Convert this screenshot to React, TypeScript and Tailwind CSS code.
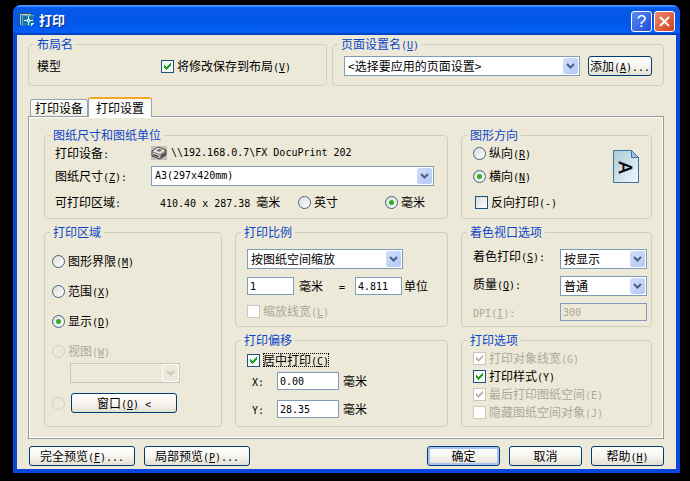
import type { ReactNode } from "react";
import clsx from "clsx";

// Latin runs are set in a small monospace face, "_X" marks the access key.
function Txt({ children }: { children: string }) {
  const parts = children.split(/([\x20-\x7e]+)/).filter(Boolean);
  return (
    <>
      {parts.map((part, i) => {
        if (!/^[\x20-\x7e]+$/.test(part)) return <span key={i}>{part}</span>;
        const [before, after] = part.split("_");
        return (
          <span
            key={i}
            className="whitespace-pre font-['DejaVu_Sans_Mono',monospace] text-[10px] leading-none"
          >
            {before}
            {after && <span className="underline underline-offset-1">{after[0]}</span>}
            {after && after.slice(1)}
          </span>
        );
      })}
    </>
  );
}

type GroupProps = { title: string; className?: string; children: ReactNode };

function Group({ title, className, children }: GroupProps) {
  return (
    <fieldset className={clsx("min-w-0 rounded-[4px] border border-[#d0cfbe]", className)}>
      <legend className="ml-[5px] h-[14px] px-[3px] leading-[14px] text-[#0b46c8]">
        <Txt>{title}</Txt>
      </legend>
      {children}
    </fieldset>
  );
}

type CheckProps = {
  label: string;
  checked?: boolean;
  disabled?: boolean;
  focused?: boolean;
};

function Check({ label, checked, disabled, focused }: CheckProps) {
  return (
    <label className={clsx("flex items-center gap-[3px]", disabled && "text-[#aca899]")}>
      <span className="grid size-[13px] shrink-0 place-items-center">
        <input
          type="checkbox"
          defaultChecked={checked}
          disabled={disabled}
          className="peer col-start-1 row-start-1 size-[13px] appearance-none border border-[#1c5180] bg-linear-to-br from-[#dcdcd7] to-white checked:bg-none checked:bg-[#f6f8f4] disabled:border-[#cac8bb] disabled:bg-none disabled:bg-white"
        />
        <svg
          viewBox="0 0 7 7"
          className={clsx(
            "pointer-events-none col-start-1 row-start-1 hidden size-[7px] peer-checked:block",
            disabled ? "fill-[#bfbcae]" : "fill-[#21a121]"
          )}
          shapeRendering="crispEdges"
        >
          <path d="M0 2h1v1h1v1h1v-1h1v-1h1v-1h1v-1h1v3h-1v1h-1v1h-1v1h-1v1h-1v-1h-1v-1h-1z" />
        </svg>
      </span>
      <span
        className={clsx(
          "whitespace-nowrap leading-[14px]",
          focused && "outline-1 outline-dotted outline-black -outline-offset-1"
        )}
      >
        <Txt>{label}</Txt>
      </span>
    </label>
  );
}

type RadioProps = { label?: string; name: string; checked?: boolean; disabled?: boolean };

function Radio({ label, name, checked, disabled }: RadioProps) {
  return (
    <label
      className={clsx("flex items-center gap-[3px] leading-[14px]", disabled && "text-[#aca899]")}
    >
      <span className="grid size-[13px] shrink-0 place-items-center">
        <input
          type="radio"
          name={name}
          defaultChecked={checked}
          disabled={disabled}
          aria-label={label ? undefined : "窗口"}
          className="peer col-start-1 row-start-1 size-[13px] appearance-none rounded-full border border-[#3f6388] bg-linear-to-br from-[#dcdcd7] to-white disabled:border-[#cfcdbf] disabled:bg-none"
        />
        <span className="pointer-events-none col-start-1 row-start-1 hidden size-[5px] rounded-full bg-[#2fae2b] peer-checked:block" />
      </span>
      {label && (
        <span className="whitespace-nowrap">
          <Txt>{label}</Txt>
        </span>
      )}
    </label>
  );
}

type SelectProps = {
  id?: string;
  label?: string;
  value: string;
  mono?: boolean;
  disabled?: boolean;
  className?: string;
};

function Select({ id, label, value, mono, disabled, className }: SelectProps) {
  return (
    <div className={clsx("grid h-5 items-center", className)}>
      <select
        id={id}
        aria-label={label}
        disabled={disabled}
        className={clsx(
          "col-start-1 row-start-1 h-5 w-full min-w-0 appearance-none border pl-[3px] pr-5 opacity-100",
          mono && "font-['DejaVu_Sans_Mono',monospace] text-[10px]",
          disabled ? "border-[#c9c7ba] bg-[#ece9d8]" : "border-[#7f9db9] bg-white"
        )}
      >
        <option>{value}</option>
      </select>
      <span
        className={clsx(
          "pointer-events-none col-start-1 row-start-1 mr-[2px] grid h-4 w-[15px] place-items-center justify-self-end rounded-[2px]",
          disabled
            ? "bg-[#ece9dc] outline-1 outline-white"
            : "bg-linear-to-br from-[#d3defc] to-[#b4c8f6]"
        )}
      >
        <svg viewBox="0 0 9 6" className="h-[6px] w-[9px]" fill="none">
          <path d="M1 1l3.5 3.5L8 1" strokeWidth="2" stroke={disabled ? "#c9c7ba" : "#4d6185"} />
        </svg>
      </span>
    </div>
  );
}

type FieldProps = {
  id?: string;
  label?: string;
  value: string;
  disabled?: boolean;
  className?: string;
};

function Field({ id, label, value, disabled, className }: FieldProps) {
  return (
    <input
      type="text"
      id={id}
      aria-label={label}
      defaultValue={value}
      disabled={disabled}
      className={clsx(
        "h-[18px] border border-[#7f9db9] pl-[2px] font-['DejaVu_Sans_Mono',monospace] text-[10px]",
        disabled ? "bg-[#ece9d8] text-[#aca899]" : "bg-white",
        className
      )}
    />
  );
}

type ButtonProps = { children: string; primary?: boolean; className?: string };

function Button({ children, primary, className }: ButtonProps) {
  return (
    <button
      type="button"
      className={clsx(
        "h-5 whitespace-nowrap rounded-[3px] border border-[#003c74] bg-linear-to-b from-white via-[#f6f5f0] to-[#e3dfd2] leading-[14px]",
        primary && "shadow-[inset_0_0_0_2px_#a9c2f0]",
        className
      )}
    >
      <Txt>{children}</Txt>
    </button>
  );
}

function AppIcon() {
  return (
    <svg viewBox="0 0 16 14" className="h-[14px] w-4 shrink-0" shapeRendering="crispEdges">
      <path d="M0 0h13v2H2v11H0z" fill="#31515f" />
      <path d="M1 1h11v1H2v10H1z" fill="#b9c8ca" />
      <path d="M3 2h12v8l-3 3H3z" fill="#1478a8" />
      <path d="M3 2h12v1H4v10H3z" fill="#58a9c8" />
      <path d="M9 3h1v9H9zM5 7h9v1H5z" fill="#e8faff" />
      <path d="M8 6h3v3H8z" fill="#d5f4ff" />
      <path d="M9 7h1v1H9z" fill="#1478a8" />
      <path d="M12 10h3l-3 3z" fill="#d6eef4" />
    </svg>
  );
}

function PrinterIcon() {
  return (
    <svg viewBox="0 0 16 14" className="h-[14px] w-4 shrink-0">
      <rect width="16" height="14" fill="#c3c1b6" />
      <path d="M1 5l6-4 8 3v5l-6 4-8-3z" fill="#8a8a86" stroke="#2b2b2b" strokeWidth=".8" />
      <path d="M1.500 5.200L7 1.600l7.200 2.700L9 8z" fill="#e8e8e4" />
      <path d="M5 4.500L8 2.700l3.500 1.300L8.500 6z" fill="#777" />
      <path d="M1.500 6.500L9 9.200v3L2 9.800z" fill="#c5c5c0" />
      <path d="M2.500 8.300l5 1.800v1l-5-1.700z" fill="#222" />
      <path d="M10 9.500l4.500-3v2L10 11.800z" fill="#4a4a48" />
    </svg>
  );
}

function PageIcon() {
  return (
    <svg viewBox="0 0 26 33" className="h-[33px] w-[26px]">
      <defs>
        <linearGradient id="sheet" x1="0" y1="0" x2="1" y2="1">
          <stop offset="0" stopColor="#a9c9d6" />
          <stop offset="1" stopColor="#f3f9fb" />
        </linearGradient>
      </defs>
      <path d="M.5.5h18l7 7v25H.5z" fill="url(#sheet)" stroke="#3c72a4" />
      <path d="M18.500.5v7h7z" fill="#a3bfe8" stroke="#3c72a4" />
      <text
        x="17.5"
        y="-6"
        transform="rotate(90)"
        textAnchor="middle"
        fontFamily="Liberation Sans, sans-serif"
        fontSize="18"
        stroke="#000"
        strokeWidth=".4"
      >
        A
      </text>
    </svg>
  );
}

export default function App() {
  return (
    <main className="min-h-screen bg-black pb-[8px] pl-[13px] pr-[10px] pt-[5px] font-['Noto_Sans_CJK_SC',sans-serif] text-[12px] leading-[14px] text-black">
      <div className="overflow-hidden rounded-t-lg bg-[#0a46dc]">
        <header className="flex h-[30px] items-center bg-linear-to-b from-[#0a5be8] via-[#0256e8] to-[#0460fb] pl-[6px] pr-[5px] shadow-[inset_0_2px_1px_#3d93ff,inset_0_-2px_1px_#0244c4]">
          <AppIcon />
          <h1 className="ml-1 flex-1 text-[13px] font-bold leading-4 text-white [text-shadow:1px_1px_#0a2a80]">
            打印
          </h1>
          <div className="flex gap-[2px] pt-[3px]">
            <button
              type="button"
              aria-label="帮助"
              className="grid size-[21px] place-items-center rounded-[3px] border border-white bg-linear-to-br from-[#5d8cf5] to-[#1c4bd4] font-['Liberation_Sans',sans-serif] text-[17px] leading-4 text-white"
            >
              ?
            </button>
            <button
              type="button"
              aria-label="关闭"
              className="grid size-[21px] place-items-center rounded-[3px] border border-white bg-linear-to-br from-[#ee8a6c] to-[#cf3c13]"
            >
              <svg viewBox="0 0 11 11" className="size-[11px]" stroke="#fff" strokeWidth="2">
                <path d="M1 1l9 9M10 1l-9 9" />
              </svg>
            </button>
          </div>
        </header>

        <form className="mx-1 mb-1 bg-[#ece9d8] pb-[3px] pl-[11px] pr-3 pt-[2px]">
          <div className="grid grid-cols-[299px_minmax(0,1fr)] gap-[5px]">
            <Group title="布局名">
              <div className="flex h-[34px] items-start pl-2 pt-[5px]">
                <div className="flex h-5 items-center">
                  <span className="w-[124px]">模型</span>
                  <Check label="将修改保存到布局(_V)" checked />
                </div>
              </div>
            </Group>
            <Group title="页面设置名(_U)">
              <div className="flex h-[34px] items-start gap-2 pl-[11px] pr-[11px] pt-[5px]">
                <Select label="页面设置名" value="<选择要应用的页面设置>" className="flex-1" />
                <Button className="w-16">添加(_A)...</Button>
              </div>
            </Group>
          </div>

          <div role="tablist" className="mt-[11px] flex items-end pl-[2px]">
            <button
              type="button"
              role="tab"
              aria-selected="false"
              className="h-[17px] w-[58px] whitespace-nowrap rounded-t-[3px] border border-b-0 border-[#91a7b4] bg-linear-to-b from-white to-[#f0efe6]"
            >
              打印设备
            </button>
            <button
              type="button"
              role="tab"
              aria-selected="true"
              className="relative -mb-px h-5 w-16 whitespace-nowrap rounded-t-[3px] border border-b-0 border-t-2 border-[#91a7b4] border-t-[#f5a623] bg-[#fcfcfa]"
            >
              打印设置
            </button>
          </div>

          <div
            role="tabpanel"
            className="grid grid-cols-[178px_minmax(0,1fr)_191px] gap-x-[13px] gap-y-[6px] border border-[#919b9c] px-[11px] pb-[11px] pl-[15px] pt-[11px] shadow-[inset_1px_1px_#fff,inset_-1px_-1px_#fff]"
          >
            <Group title="图纸尺寸和图纸单位" className="col-span-2">
              <div className="grid h-[76px] grid-cols-[96px_minmax(0,1fr)] content-start gap-y-1 pl-[10px] pr-[13px] pt-[2px]">
                <span className="flex h-[18px] items-center">
                  <span>
                    <Txt>打印设备:</Txt>
                  </span>
                </span>
                <span className="flex h-[18px] items-center gap-1">
                  <PrinterIcon />
                  <Txt>{"\\\\192.168.0.7\\FX DocuPrint 202"}</Txt>
                </span>
                <label htmlFor="paper" className="self-center">
                  <Txt>图纸尺寸(_Z):</Txt>
                </label>
                <Select id="paper" value="A3(297x420mm)" mono />
                <span className="self-center">
                  <Txt>可打印区域:</Txt>
                </span>
                <div className="flex h-6 items-center pl-[9px]">
                  <span className="w-[138px] whitespace-nowrap">
                    <Txt>410.40 x 287.38 毫米</Txt>
                  </span>
                  <span className="w-[87px]">
                    <Radio name="unit" label="英寸" />
                  </span>
                  <Radio name="unit" label="毫米" checked />
                </div>
              </div>
            </Group>

            <Group title="图形方向">
              <div className="flex justify-between pl-[11px] pr-3 pt-[2px]">
                <div className="flex flex-col gap-1">
                  <div className="flex h-[18px] items-center">
                    <Radio name="orientation" label="纵向(_R)" />
                  </div>
                  <div className="flex h-5 items-center">
                    <Radio name="orientation" label="横向(_N)" checked />
                  </div>
                  <div className="flex h-6 items-center pl-[2px]">
                    <Check label="反向打印(-)" />
                  </div>
                </div>
                <div className="pt-[6px]">
                  <PageIcon />
                </div>
              </div>
            </Group>

            <Group title="打印区域" className="row-span-2">
              <div className="flex flex-col gap-[10px] pb-3 pl-[7px] pt-3">
                <div className="flex h-5 items-center">
                  <Radio name="area" label="图形界限(_M)" />
                </div>
                <div className="flex h-5 items-center">
                  <Radio name="area" label="范围(_X)" />
                </div>
                <div className="flex h-5 items-center">
                  <Radio name="area" label="显示(_D)" checked />
                </div>
                <div>
                  <div className="flex h-5 items-center">
                    <Radio name="area" label="视图(_W)" disabled />
                  </div>
                  <Select
                    label="视图"
                    value=""
                    disabled
                    className="ml-[18px] mt-[2px] w-[110px]"
                  />
                </div>
                <div className="flex h-5 items-center gap-[6px]">
                  <Radio name="area" disabled />
                  <Button className="w-[106px]">{"窗口(_O) <"}</Button>
                </div>
              </div>
            </Group>

            <Group title="打印比例">
              <div className="flex h-[87px] flex-col gap-2 pl-[11px] pt-[10px]">
                <Select label="打印比例" value="按图纸空间缩放" className="w-[156px]" />
                <div className="flex items-center">
                  <Field label="毫米" value="1" className="w-[47px]" />
                  <span className="ml-[5px] w-10">毫米</span>
                  <span className="w-4">
                    <Txt>=</Txt>
                  </span>
                  <Field label="单位" value="4.811" className="w-[47px]" />
                  <span className="ml-[2px]">单位</span>
                </div>
                <div className="flex h-4 items-center">
                  <Check label="缩放线宽(_L)" disabled />
                </div>
              </div>
            </Group>

            <Group title="着色视口选项">
              <div className="flex justify-between pl-[11px] pr-1 pt-[10px]">
                <div className="flex flex-col gap-[14px] whitespace-nowrap">
                  <label htmlFor="shade" className="h-[14px]">
                    <Txt>着色打印(_S):</Txt>
                  </label>
                  <label htmlFor="quality" className="h-[14px]">
                    <Txt>质量(_Q):</Txt>
                  </label>
                  <label htmlFor="dpi" className="h-[14px] text-[#aca899]">
                    <Txt>DPI(_I):</Txt>
                  </label>
                </div>
                <div className="flex w-[87px] flex-col gap-[7px]">
                  <Select id="shade" value="按显示" />
                  <Select id="quality" value="普通" />
                  <Field id="dpi" value="300" disabled />
                </div>
              </div>
            </Group>

            <Group title="打印偏移">
              <div className="flex h-[79px] flex-col pl-[11px] pt-[5px]">
                <div className="flex h-4 items-center">
                  <Check label="居中打印(_C)" checked focused />
                </div>
                <div className="mt-1 flex flex-col gap-[10px] pl-[5px]">
                  <div className="flex items-center">
                    <label htmlFor="offset-x" className="w-[25px]">
                      <Txt>X:</Txt>
                    </label>
                    <Field id="offset-x" value="0.00" className="w-[62px]" />
                    <span className="ml-1">毫米</span>
                  </div>
                  <div className="flex items-center">
                    <label htmlFor="offset-y" className="w-[25px]">
                      <Txt>Y:</Txt>
                    </label>
                    <Field id="offset-y" value="28.35" className="w-[62px]" />
                    <span className="ml-1">毫米</span>
                  </div>
                </div>
              </div>
            </Group>

            <Group title="打印选项">
              <div className="grid auto-rows-[18px] items-center pl-[11px] pt-[2px]">
                <Check label="打印对象线宽(G)" checked disabled />
                <Check label="打印样式(Y)" checked />
                <Check label="最后打印图纸空间(E)" checked disabled />
                <Check label="隐藏图纸空间对象(J)" disabled />
              </div>
            </Group>
          </div>

          <footer className="flex gap-[9px] pl-px pt-[7px]">
            <Button className="w-[106px]">完全预览(_F)...</Button>
            <Button className="w-[106px]">局部预览(_P)...</Button>
            <Button primary className="ml-auto w-[73px]">
              确定
            </Button>
            <Button className="w-[73px]">取消</Button>
            <Button className="w-[73px]">帮助(_H)</Button>
          </footer>
        </form>
      </div>
    </main>
  );
}
